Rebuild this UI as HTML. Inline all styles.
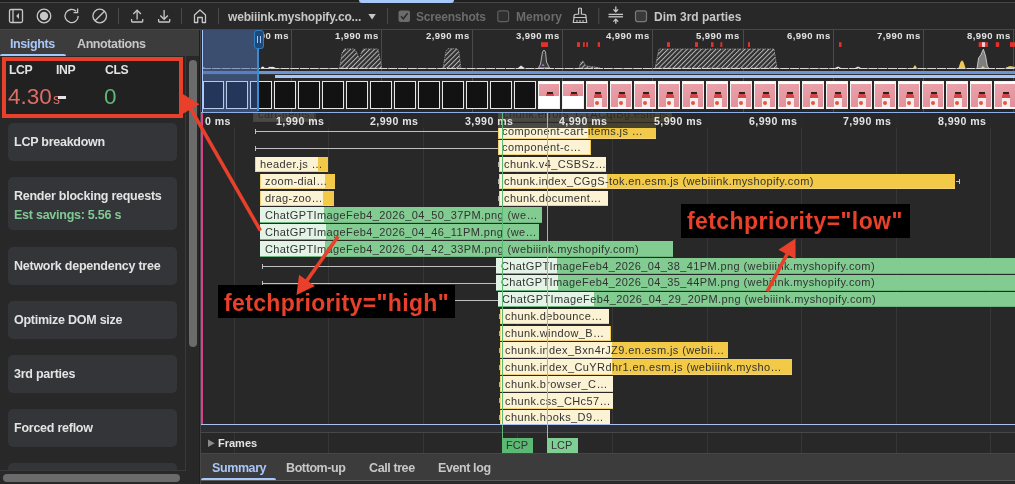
<!DOCTYPE html><html><head><meta charset="utf-8"><style>
*{margin:0;padding:0;box-sizing:border-box}
html,body{width:1015px;height:484px;overflow:hidden;background:#282828;font-family:"Liberation Sans", sans-serif;}
.a{position:absolute}
.t{position:absolute;white-space:nowrap;line-height:1;will-change:transform}
.card{position:absolute;left:8px;width:169px;background:#333538;border-radius:5px}
.ct{will-change:transform;position:absolute;left:6px;font-size:12.5px;font-weight:bold;letter-spacing:-0.25px;color:#e3e3e3;white-space:nowrap;line-height:1}
.bar{position:absolute;height:15.8px;overflow:hidden;white-space:nowrap}
.bt{will-change:transform;position:absolute;left:4.5px;top:2.5px;font-size:11px;letter-spacing:0.39px;color:#333;line-height:1;white-space:nowrap}
</style></head><body>
<div class="a" style="left:0;top:0;width:1015px;height:2px;background:#1f1f1f"></div><div class="a" style="left:0;top:2px;width:1015px;height:1px;background:#474747"></div><div class="a" style="left:358.8px;top:0;width:95.3px;height:2.8px;background:#a8c7fa;border-radius:0 0 3px 3px"></div><div class="a" style="left:0;top:3px;width:1015px;height:26px;background:#282828"></div><div class="a" style="left:0;top:29px;width:1015px;height:1px;background:#474747"></div><svg class="a" style="left:0;top:0" width="1015" height="30"><rect x="9.5" y="9.5" width="13" height="13" rx="1.5" fill="none" stroke="#c7c7c7" stroke-width="1.3"/><line x1="13" y1="9.5" x2="13" y2="22.5" stroke="#c7c7c7" stroke-width="1.3"/><path d="M19 13 L16.2 16 L19 19 Z" fill="#c7c7c7"/><circle cx="44" cy="16" r="6.8" fill="none" stroke="#c7c7c7" stroke-width="1.3"/><circle cx="44" cy="16" r="4.2" fill="#c7c7c7"/><path d="M78.2 16 A6.6 6.6 0 1 1 76.2 11.3" fill="none" stroke="#c7c7c7" stroke-width="1.3"/><path d="M77.6 8.6 L77.6 12.6 L73.6 12.6" fill="none" stroke="#c7c7c7" stroke-width="1.3"/><circle cx="99.7" cy="16" r="6.8" fill="none" stroke="#c7c7c7" stroke-width="1.3"/><line x1="95" y1="20.8" x2="104.5" y2="11.2" stroke="#c7c7c7" stroke-width="1.3"/><line x1="118.5" y1="8" x2="118.5" y2="24" stroke="#4a4a4a" stroke-width="1"/><line x1="181.5" y1="8" x2="181.5" y2="24" stroke="#4a4a4a" stroke-width="1"/><line x1="218.5" y1="8" x2="218.5" y2="24" stroke="#4a4a4a" stroke-width="1"/><line x1="387.5" y1="8" x2="387.5" y2="24" stroke="#4a4a4a" stroke-width="1"/><line x1="598.8" y1="8" x2="598.8" y2="24" stroke="#4a4a4a" stroke-width="1"/><path d="M131.6 19 L131.6 21.3 Q131.6 22 132.3 22 L142 22 Q142.7 22 142.7 21.3 L142.7 19" fill="none" stroke="#c7c7c7" stroke-width="1.3"/><line x1="137.1" y1="10.5" x2="137.1" y2="19.5" stroke="#c7c7c7" stroke-width="1.3"/><path d="M133.3 14 L137.1 10.2 L140.9 14" fill="none" stroke="#c7c7c7" stroke-width="1.3"/><path d="M158.6 19 L158.6 21.3 Q158.6 22 159.3 22 L169 22 Q169.7 22 169.7 21.3 L169.7 19" fill="none" stroke="#c7c7c7" stroke-width="1.3"/><line x1="164.1" y1="10" x2="164.1" y2="19" stroke="#c7c7c7" stroke-width="1.3"/><path d="M160.3 15.5 L164.1 19.3 L167.9 15.5" fill="none" stroke="#c7c7c7" stroke-width="1.3"/><path d="M194.5 22.5 L194.5 15 L200 10 L205.5 15 L205.5 22.5 L202.3 22.5 L202.3 17.5 L197.7 17.5 L197.7 22.5 Z" fill="none" stroke="#c7c7c7" stroke-width="1.3" stroke-linejoin="round"/><path d="M368.4 14 L375.8 14 L372.1 19.5 Z" fill="#c7c7c7"/><rect x="398.5" y="10.5" width="11.5" height="11.5" rx="2" fill="#6b6b6b"/><path d="M401 16.3 L403.3 18.8 L407.6 13.3" fill="none" stroke="#282828" stroke-width="1.4"/><rect x="497.8" y="10.8" width="10.8" height="10.8" rx="2" fill="#2f2f2f" stroke="#5f5f5f" stroke-width="1.2"/><path d="M578.6 8.5 Q580 7.5 581.4 8.5 L581.4 14 L585 14.5 Q586 15 586 16 L586 17.5 L574 17.5 L574 16 Q574 15 575 14.5 L578.6 14 Z" fill="none" stroke="#c7c7c7" stroke-width="1.2"/><path d="M574 17.5 L573.3 22.5 L586.7 22.5 L586 17.5" fill="none" stroke="#c7c7c7" stroke-width="1.2"/><path d="M577 20 L577 22.5 M580 20 L580 22.5 M583 20 L583 22.5" stroke="#c7c7c7" stroke-width="1"/><line x1="608.5" y1="14.4" x2="623" y2="14.4" stroke="#c7c7c7" stroke-width="1.3"/><line x1="608.5" y1="16.8" x2="623" y2="16.8" stroke="#c7c7c7" stroke-width="1.3"/><path d="M615.8 6.5 L615.8 11.5 M613.4 9.4 L615.8 11.8 L618.2 9.4" fill="none" stroke="#c7c7c7" stroke-width="1.3"/><path d="M615.8 23.8 L615.8 19.5 M613.4 21.6 L615.8 19.2 L618.2 21.6" fill="none" stroke="#c7c7c7" stroke-width="1.3"/><rect x="635.5" y="10.8" width="11" height="10.8" rx="2" fill="#3a3a3a" stroke="#7a7a7a" stroke-width="1.2"/></svg><div class="t" style="left:228.4px;top:10.8px;font-size:12px;font-weight:bold;letter-spacing:-0.17px;color:#c7c7c7">webiiink.myshopify.co...</div><div class="t" style="left:416.4px;top:10.8px;font-size:12px;font-weight:bold;letter-spacing:-0.2px;color:#6b6b6b">Screenshots</div><div class="t" style="left:515.7px;top:10.8px;font-size:12px;font-weight:bold;color:#6b6b6b">Memory</div><div class="t" style="left:653.5px;top:10.8px;font-size:12px;font-weight:bold;color:#c7c7c7">Dim 3rd parties</div><div class="a" style="left:0;top:30px;width:200px;height:26px;background:#3c3c3c"></div><div class="t" style="left:10.2px;top:37.5px;font-size:12.5px;font-weight:bold;letter-spacing:-0.4px;color:#a8c7fa">Insights</div><div class="t" style="left:76.5px;top:37.5px;font-size:12.5px;font-weight:bold;letter-spacing:-0.4px;color:#c7c7c7">Annotations</div><div class="a" style="left:0;top:54px;width:66px;height:2.6px;background:#a8c7fa;border-radius:2px 2px 0 0"></div><div class="a" style="left:0;top:56px;width:200px;height:428px;background:#282828"></div><div class="a" style="left:185px;top:56px;width:1px;height:414px;background:#3a3a3a"></div><div class="a" style="left:0;top:469.5px;width:185.5px;height:1px;background:#3a3a3a"></div><div class="a" style="left:189px;top:60px;width:8px;height:287px;background:#6b6b6b;border-radius:4px"></div><div class="a" style="left:3px;top:473.6px;width:176.5px;height:8px;background:#6b6b6b;border-radius:4px"></div><div class="a" style="left:199px;top:30px;width:1px;height:454px;background:#1e1e1e"></div><div class="a" style="left:200px;top:30px;width:1px;height:454px;background:#474747"></div><div class="card" style="top:123px;height:38px"><div class="ct" style="top:12.6px">LCP breakdown</div></div><div class="card" style="top:177px;height:53px"><div class="ct" style="top:12.8px">Render blocking requests</div><div class="ct" style="top:31.6px;color:#81c995">Est savings: 5.56 s</div></div><div class="card" style="top:247px;height:38px"><div class="ct" style="top:12.6px">Network dependency tree</div></div><div class="card" style="top:301px;height:38px"><div class="ct" style="top:12.6px">Optimize DOM size</div></div><div class="card" style="top:355px;height:38px"><div class="ct" style="top:12.6px">3rd parties</div></div><div class="card" style="top:409px;height:38px"><div class="ct" style="top:12.6px">Forced reflow</div></div><div class="card" style="top:463px;height:7px;border-radius:5px 5px 0 0"></div><div class="a" style="left:2px;top:57px;width:181px;height:60.5px;border:4.3px solid #e8402a;background:#212121"></div><div class="t" style="left:8.6px;top:64.3px;font-size:12.2px;font-weight:bold;letter-spacing:-0.35px;color:#e3e3e3">LCP</div><div class="t" style="left:56px;top:64.3px;font-size:12.2px;font-weight:bold;letter-spacing:-0.35px;color:#e3e3e3">INP</div><div class="t" style="left:104.5px;top:64.3px;font-size:12.2px;font-weight:bold;letter-spacing:-0.35px;color:#e3e3e3">CLS</div><div class="t" style="left:8px;top:86px;font-size:22.5px;color:#dd6d65">4.30<span style="font-size:14px;margin-left:1.2px">s</span></div><div class="a" style="left:57.5px;top:96px;width:8px;height:2.5px;background:#e3e3e3"></div><div class="t" style="left:104px;top:86px;font-size:22.5px;color:#5bb974">0</div><div class="a" style="left:201px;top:30px;width:814px;height:454px;background:#282828"></div><div class="a" style="left:291.00px;top:30px;width:1px;height:82px;background:#4a4a4a"></div><div class="a" style="left:381.30px;top:30px;width:1px;height:82px;background:#4a4a4a"></div><div class="a" style="left:471.60px;top:30px;width:1px;height:82px;background:#4a4a4a"></div><div class="a" style="left:561.90px;top:30px;width:1px;height:82px;background:#4a4a4a"></div><div class="a" style="left:652.20px;top:30px;width:1px;height:82px;background:#4a4a4a"></div><div class="a" style="left:742.50px;top:30px;width:1px;height:82px;background:#4a4a4a"></div><div class="a" style="left:832.80px;top:30px;width:1px;height:82px;background:#4a4a4a"></div><div class="a" style="left:923.10px;top:30px;width:1px;height:82px;background:#4a4a4a"></div><div class="a" style="left:1013.40px;top:30px;width:1px;height:82px;background:#4a4a4a"></div><div class="t" style="right:726.30px;top:31.4px;font-size:9.5px;font-weight:bold;letter-spacing:0.45px;color:#e3e3e3">990 ms</div><div class="t" style="right:636.00px;top:31.4px;font-size:9.5px;font-weight:bold;letter-spacing:0.45px;color:#e3e3e3">1,990 ms</div><div class="t" style="right:545.70px;top:31.4px;font-size:9.5px;font-weight:bold;letter-spacing:0.45px;color:#e3e3e3">2,990 ms</div><div class="t" style="right:455.40px;top:31.4px;font-size:9.5px;font-weight:bold;letter-spacing:0.45px;color:#e3e3e3">3,990 ms</div><div class="t" style="right:365.10px;top:31.4px;font-size:9.5px;font-weight:bold;letter-spacing:0.45px;color:#e3e3e3">4,990 ms</div><div class="t" style="right:274.80px;top:31.4px;font-size:9.5px;font-weight:bold;letter-spacing:0.45px;color:#e3e3e3">5,990 ms</div><div class="t" style="right:184.50px;top:31.4px;font-size:9.5px;font-weight:bold;letter-spacing:0.45px;color:#e3e3e3">6,990 ms</div><div class="t" style="right:94.20px;top:31.4px;font-size:9.5px;font-weight:bold;letter-spacing:0.45px;color:#e3e3e3">7,990 ms</div><div class="t" style="right:3.90px;top:31.4px;font-size:9.5px;font-weight:bold;letter-spacing:0.45px;color:#e3e3e3">8,990 ms</div><svg class="a" style="left:0;top:0" width="1015" height="112"><defs><pattern id="h" width="3.4" height="3.4" patternUnits="userSpaceOnUse" patternTransform="rotate(45)"><rect width="3.4" height="3.4" fill="#303030"/><rect width="1" height="3.4" fill="#b8b8b8"/></pattern></defs><path d="M339.6,68 L342,53 L344.5,48.9 L354.5,48.9 L357,53 L359.5,59.5 L361.5,52 L363.5,48.9 L378,48.9 L381.7,68 Z" fill="url(#h)" stroke="#bdbdbd" stroke-width="0.6" stroke-dasharray="1.5 1"/><path d="M443,68 L446,51 L448,48.7 L457,48.7 L459,52 L460.8,68 Z" fill="url(#h)" stroke="#bdbdbd" stroke-width="0.6" stroke-dasharray="1.5 1"/><path d="M655,68 L659,49 L774,49 L777,68 Z" fill="url(#h)" stroke="#bdbdbd" stroke-width="0.6" stroke-dasharray="1.5 1"/><path d="M579,68 L581,62 L583,61 L586,66 L595,67 L600,68 Z" fill="url(#h)" stroke="#bdbdbd" stroke-width="0.6" stroke-dasharray="1.5 1"/><path d="M538.5 68 L540.5 64 L542.5 52 L544 50 L545.5 52 L546.5 62 L549.5 68 Z" fill="#3a3a3a" stroke="#d0d0d0" stroke-width="0.8"/><path d="M541.5 66 L543 63.5 L544.5 66 Z" fill="#b06cd8"/><path d="M518 68 L521 65.5 L524.5 68 Z" fill="#e3e3e3"/><path d="M977 68.5 L978.6 58 L980.8 55 L983.4 49.2 L985.6 56 L987.3 66 L989 68.5 Z" fill="#7e7e7e" stroke="#e0e0e0" stroke-width="0.8"/><path d="M958.5 68 L960.5 62 L962 60.3 L963.5 62 L965.5 68 Z" fill="#f2c94c"/><path d="M913 68 L915 65 L917 68 Z" fill="#f2c94c"/><path d="M981 68 L983 66 L985 68 Z" fill="#f2c94c"/><path d="M1005 68 L1010 66 L1015 67 L1015 68 Z" fill="#f2c94c"/><path d="M835 68 L838 66.5 L841 68 Z" fill="#e3e3e3"/><path d="M855 68 L858 66.5 L861 68 Z" fill="#e3e3e3"/><path d="M260.5 68.5 Q262.7 64.5 265 68.5 Z M267.5 68.5 Q269 66 271 67 Q273 65.8 276.6 68.5 Z M202 68.5 Q203.5 65.5 205.5 68.5 Z" fill="#e8e8e8"/><line x1="202" y1="68.5" x2="1015" y2="68.5" stroke="#d8d8d8" stroke-width="1" stroke-dasharray="9 0.8"/><rect x="541" y="42.2" width="7.0" height="4.7" fill="#e8302a"/><rect x="577" y="42.2" width="3.0" height="4.7" fill="#e8302a"/><rect x="583" y="42.2" width="1.8" height="4.7" fill="#e8302a"/><rect x="586.2" y="42.2" width="1.8" height="4.7" fill="#e8302a"/><rect x="597.7" y="42.2" width="2.3" height="4.7" fill="#e8302a"/><rect x="667" y="42.2" width="3.0" height="4.7" fill="#e8302a"/><rect x="695" y="42.2" width="3.0" height="4.7" fill="#e8302a"/><rect x="711" y="42.2" width="2.5" height="4.7" fill="#e8302a"/><rect x="720.4" y="42.2" width="1.9" height="4.7" fill="#e8302a"/><rect x="748" y="42.2" width="2.0" height="4.7" fill="#e8302a"/><rect x="839" y="42.2" width="2.5" height="4.7" fill="#e8302a"/><rect x="978.7" y="42.2" width="9.2" height="4.7" fill="#e8302a"/><rect x="995.8" y="42.2" width="3.4" height="4.7" fill="#e8302a"/><rect x="1010" y="42.2" width="5.0" height="4.7" fill="#e8302a"/><rect x="982" y="42.2" width="3" height="4.7" fill="#f0d0d0"/></svg><div class="a" style="left:202px;top:71px;width:813px;height:3.1px;background:#6a96d8"></div><div class="a" style="left:202px;top:74.1px;width:813px;height:1px;background:#333"></div><div class="a" style="left:275px;top:75.1px;width:740px;height:3px;background:#a8c7fa"></div><div class="a" style="left:202.50px;top:80.8px;width:21.8px;height:28.1px;border:1.2px solid #e6e6e6;background:#121212"></div><div class="a" style="left:226.49px;top:80.8px;width:21.8px;height:28.1px;border:1.2px solid #e6e6e6;background:#121212"></div><div class="a" style="left:250.48px;top:80.8px;width:21.8px;height:28.1px;border:1.2px solid #e6e6e6;background:#121212"></div><div class="a" style="left:274.47px;top:80.8px;width:21.8px;height:28.1px;border:1.2px solid #e6e6e6;background:#121212"></div><div class="a" style="left:298.46px;top:80.8px;width:21.8px;height:28.1px;border:1.2px solid #e6e6e6;background:#121212"></div><div class="a" style="left:322.45px;top:80.8px;width:21.8px;height:28.1px;border:1.2px solid #e6e6e6;background:#121212"></div><div class="a" style="left:346.44px;top:80.8px;width:21.8px;height:28.1px;border:1.2px solid #e6e6e6;background:#121212"></div><div class="a" style="left:370.43px;top:80.8px;width:21.8px;height:28.1px;border:1.2px solid #e6e6e6;background:#121212"></div><div class="a" style="left:394.42px;top:80.8px;width:21.8px;height:28.1px;border:1.2px solid #e6e6e6;background:#121212"></div><div class="a" style="left:418.41px;top:80.8px;width:21.8px;height:28.1px;border:1.2px solid #e6e6e6;background:#121212"></div><div class="a" style="left:442.40px;top:80.8px;width:21.8px;height:28.1px;border:1.2px solid #e6e6e6;background:#121212"></div><div class="a" style="left:466.39px;top:80.8px;width:21.8px;height:28.1px;border:1.2px solid #e6e6e6;background:#121212"></div><div class="a" style="left:490.38px;top:80.8px;width:21.8px;height:28.1px;border:1.2px solid #e6e6e6;background:#121212"></div><div class="a" style="left:514.37px;top:80.8px;width:21.8px;height:28.1px;border:1.2px solid #e6e6e6;background:#121212"></div><div class="a" style="left:538.36px;top:80.8px;width:21.8px;height:28.1px;border:1px solid #f2f2f2;background:#fff;overflow:hidden"><div class="a" style="left:0;top:0;width:100%;height:3.2px;background:#fff"></div><div class="a" style="left:0;top:2.4px;width:100%;height:11.7px;background:linear-gradient(160deg,#eba2aa,#e08f99)"></div><div class="a" style="left:7.5px;top:10.3px;width:6.4px;height:2px;background:#2a2222"></div><div class="a" style="left:7px;top:12.3px;width:7.5px;height:1.6px;background:#d84a4a"></div></div><div class="a" style="left:562.35px;top:80.8px;width:21.8px;height:28.1px;border:1px solid #f2f2f2;background:#fff;overflow:hidden"><div class="a" style="left:0;top:0;width:100%;height:3.2px;background:#fff"></div><div class="a" style="left:0;top:2.4px;width:100%;height:11.7px;background:linear-gradient(160deg,#eba2aa,#e08f99)"></div><div class="a" style="left:7.5px;top:10.3px;width:6.4px;height:2px;background:#2a2222"></div><div class="a" style="left:7px;top:12.3px;width:7.5px;height:1.6px;background:#d84a4a"></div></div><div class="a" style="left:586.34px;top:80.8px;width:21.8px;height:28.1px;border:1px solid #f2f2f2;background:#fff;overflow:hidden"><div class="a" style="left:0;top:0;width:100%;height:3.2px;background:#fff"></div><div class="a" style="left:0;top:2.4px;width:100%;height:23px;background:linear-gradient(160deg,#eba2aa,#e08f99)"></div><div class="a" style="left:7.5px;top:10.3px;width:6.4px;height:2px;background:#2a2222"></div><div class="a" style="left:7px;top:12.2px;width:7.8px;height:3.8px;background:#d64545;border-radius:2px 2px 0 0"></div><div class="a" style="left:7px;top:16px;width:7.8px;height:9px;background:#f4ecec"></div><div class="a" style="left:8px;top:19.5px;width:4px;height:4px;background:#e05a40;border-radius:50%"></div></div><div class="a" style="left:610.33px;top:80.8px;width:21.8px;height:28.1px;border:1px solid #f2f2f2;background:#fff;overflow:hidden"><div class="a" style="left:0;top:0;width:100%;height:3.2px;background:#fff"></div><div class="a" style="left:0;top:2.4px;width:100%;height:23px;background:linear-gradient(160deg,#eba2aa,#e08f99)"></div><div class="a" style="left:7.5px;top:10.3px;width:6.4px;height:2px;background:#2a2222"></div><div class="a" style="left:7px;top:12.2px;width:7.8px;height:3.8px;background:#d64545;border-radius:2px 2px 0 0"></div><div class="a" style="left:7px;top:16px;width:7.8px;height:9px;background:#f4ecec"></div><div class="a" style="left:8px;top:19.5px;width:4px;height:4px;background:#e05a40;border-radius:50%"></div></div><div class="a" style="left:634.32px;top:80.8px;width:21.8px;height:28.1px;border:1px solid #f2f2f2;background:#fff;overflow:hidden"><div class="a" style="left:0;top:0;width:100%;height:3.2px;background:#fff"></div><div class="a" style="left:0;top:2.4px;width:100%;height:23px;background:linear-gradient(160deg,#eba2aa,#e08f99)"></div><div class="a" style="left:7.5px;top:10.3px;width:6.4px;height:2px;background:#2a2222"></div><div class="a" style="left:7px;top:12.2px;width:7.8px;height:3.8px;background:#d64545;border-radius:2px 2px 0 0"></div><div class="a" style="left:7px;top:16px;width:7.8px;height:9px;background:#f4ecec"></div><div class="a" style="left:8px;top:19.5px;width:4px;height:4px;background:#e05a40;border-radius:50%"></div></div><div class="a" style="left:658.31px;top:80.8px;width:21.8px;height:28.1px;border:1px solid #f2f2f2;background:#fff;overflow:hidden"><div class="a" style="left:0;top:0;width:100%;height:3.2px;background:#fff"></div><div class="a" style="left:0;top:2.4px;width:100%;height:23px;background:linear-gradient(160deg,#eba2aa,#e08f99)"></div><div class="a" style="left:7.5px;top:10.3px;width:6.4px;height:2px;background:#2a2222"></div><div class="a" style="left:7px;top:12.2px;width:7.8px;height:3.8px;background:#d64545;border-radius:2px 2px 0 0"></div><div class="a" style="left:7px;top:16px;width:7.8px;height:9px;background:#f4ecec"></div><div class="a" style="left:8px;top:19.5px;width:4px;height:4px;background:#e05a40;border-radius:50%"></div></div><div class="a" style="left:682.30px;top:80.8px;width:21.8px;height:28.1px;border:1px solid #f2f2f2;background:#fff;overflow:hidden"><div class="a" style="left:0;top:0;width:100%;height:3.2px;background:#fff"></div><div class="a" style="left:0;top:2.4px;width:100%;height:23px;background:linear-gradient(160deg,#eba2aa,#e08f99)"></div><div class="a" style="left:7.5px;top:10.3px;width:6.4px;height:2px;background:#2a2222"></div><div class="a" style="left:7px;top:12.2px;width:7.8px;height:3.8px;background:#d64545;border-radius:2px 2px 0 0"></div><div class="a" style="left:7px;top:16px;width:7.8px;height:9px;background:#f4ecec"></div><div class="a" style="left:8px;top:19.5px;width:4px;height:4px;background:#e05a40;border-radius:50%"></div></div><div class="a" style="left:706.29px;top:80.8px;width:21.8px;height:28.1px;border:1px solid #f2f2f2;background:#fff;overflow:hidden"><div class="a" style="left:0;top:0;width:100%;height:3.2px;background:#fff"></div><div class="a" style="left:0;top:2.4px;width:100%;height:23px;background:linear-gradient(160deg,#eba2aa,#e08f99)"></div><div class="a" style="left:7.5px;top:10.3px;width:6.4px;height:2px;background:#2a2222"></div><div class="a" style="left:7px;top:12.2px;width:7.8px;height:3.8px;background:#d64545;border-radius:2px 2px 0 0"></div><div class="a" style="left:7px;top:16px;width:7.8px;height:9px;background:#f4ecec"></div><div class="a" style="left:8px;top:19.5px;width:4px;height:4px;background:#e05a40;border-radius:50%"></div></div><div class="a" style="left:730.28px;top:80.8px;width:21.8px;height:28.1px;border:1px solid #f2f2f2;background:#fff;overflow:hidden"><div class="a" style="left:0;top:0;width:100%;height:3.2px;background:#fff"></div><div class="a" style="left:0;top:2.4px;width:100%;height:23px;background:linear-gradient(160deg,#eba2aa,#e08f99)"></div><div class="a" style="left:7.5px;top:10.3px;width:6.4px;height:2px;background:#2a2222"></div><div class="a" style="left:7px;top:12.2px;width:7.8px;height:3.8px;background:#d64545;border-radius:2px 2px 0 0"></div><div class="a" style="left:7px;top:16px;width:7.8px;height:9px;background:#f4ecec"></div><div class="a" style="left:8px;top:19.5px;width:4px;height:4px;background:#e05a40;border-radius:50%"></div></div><div class="a" style="left:754.27px;top:80.8px;width:21.8px;height:28.1px;border:1px solid #f2f2f2;background:#fff;overflow:hidden"><div class="a" style="left:0;top:0;width:100%;height:3.2px;background:#fff"></div><div class="a" style="left:0;top:2.4px;width:100%;height:23px;background:linear-gradient(160deg,#eba2aa,#e08f99)"></div><div class="a" style="left:7.5px;top:10.3px;width:6.4px;height:2px;background:#2a2222"></div><div class="a" style="left:7px;top:12.2px;width:7.8px;height:3.8px;background:#d64545;border-radius:2px 2px 0 0"></div><div class="a" style="left:7px;top:16px;width:7.8px;height:9px;background:#f4ecec"></div><div class="a" style="left:8px;top:19.5px;width:4px;height:4px;background:#e05a40;border-radius:50%"></div></div><div class="a" style="left:778.26px;top:80.8px;width:21.8px;height:28.1px;border:1px solid #f2f2f2;background:#fff;overflow:hidden"><div class="a" style="left:0;top:0;width:100%;height:3.2px;background:#fff"></div><div class="a" style="left:0;top:2.4px;width:100%;height:23px;background:linear-gradient(160deg,#eba2aa,#e08f99)"></div><div class="a" style="left:7.5px;top:10.3px;width:6.4px;height:2px;background:#2a2222"></div><div class="a" style="left:7px;top:12.2px;width:7.8px;height:3.8px;background:#d64545;border-radius:2px 2px 0 0"></div><div class="a" style="left:7px;top:16px;width:7.8px;height:9px;background:#f4ecec"></div><div class="a" style="left:8px;top:19.5px;width:4px;height:4px;background:#e05a40;border-radius:50%"></div></div><div class="a" style="left:802.25px;top:80.8px;width:21.8px;height:28.1px;border:1px solid #f2f2f2;background:#fff;overflow:hidden"><div class="a" style="left:0;top:0;width:100%;height:3.2px;background:#fff"></div><div class="a" style="left:0;top:2.4px;width:100%;height:23px;background:linear-gradient(160deg,#eba2aa,#e08f99)"></div><div class="a" style="left:7.5px;top:10.3px;width:6.4px;height:2px;background:#2a2222"></div><div class="a" style="left:7px;top:12.2px;width:7.8px;height:3.8px;background:#d64545;border-radius:2px 2px 0 0"></div><div class="a" style="left:7px;top:16px;width:7.8px;height:9px;background:#f4ecec"></div><div class="a" style="left:8px;top:19.5px;width:4px;height:4px;background:#e05a40;border-radius:50%"></div></div><div class="a" style="left:826.24px;top:80.8px;width:21.8px;height:28.1px;border:1px solid #f2f2f2;background:#fff;overflow:hidden"><div class="a" style="left:0;top:0;width:100%;height:3.2px;background:#fff"></div><div class="a" style="left:0;top:2.4px;width:100%;height:23px;background:linear-gradient(160deg,#eba2aa,#e08f99)"></div><div class="a" style="left:7.5px;top:10.3px;width:6.4px;height:2px;background:#2a2222"></div><div class="a" style="left:7px;top:12.2px;width:7.8px;height:3.8px;background:#d64545;border-radius:2px 2px 0 0"></div><div class="a" style="left:7px;top:16px;width:7.8px;height:9px;background:#f4ecec"></div><div class="a" style="left:8px;top:19.5px;width:4px;height:4px;background:#e05a40;border-radius:50%"></div></div><div class="a" style="left:850.23px;top:80.8px;width:21.8px;height:28.1px;border:1px solid #f2f2f2;background:#fff;overflow:hidden"><div class="a" style="left:0;top:0;width:100%;height:3.2px;background:#fff"></div><div class="a" style="left:0;top:2.4px;width:100%;height:23px;background:linear-gradient(160deg,#eba2aa,#e08f99)"></div><div class="a" style="left:7.5px;top:10.3px;width:6.4px;height:2px;background:#2a2222"></div><div class="a" style="left:7px;top:12.2px;width:7.8px;height:3.8px;background:#d64545;border-radius:2px 2px 0 0"></div><div class="a" style="left:7px;top:16px;width:7.8px;height:9px;background:#f4ecec"></div><div class="a" style="left:8px;top:19.5px;width:4px;height:4px;background:#e05a40;border-radius:50%"></div></div><div class="a" style="left:874.22px;top:80.8px;width:21.8px;height:28.1px;border:1px solid #f2f2f2;background:#fff;overflow:hidden"><div class="a" style="left:0;top:0;width:100%;height:3.2px;background:#fff"></div><div class="a" style="left:0;top:2.4px;width:100%;height:23px;background:linear-gradient(160deg,#eba2aa,#e08f99)"></div><div class="a" style="left:7.5px;top:10.3px;width:6.4px;height:2px;background:#2a2222"></div><div class="a" style="left:7px;top:12.2px;width:7.8px;height:3.8px;background:#d64545;border-radius:2px 2px 0 0"></div><div class="a" style="left:7px;top:16px;width:7.8px;height:9px;background:#f4ecec"></div><div class="a" style="left:8px;top:19.5px;width:4px;height:4px;background:#e05a40;border-radius:50%"></div></div><div class="a" style="left:898.21px;top:80.8px;width:21.8px;height:28.1px;border:1px solid #f2f2f2;background:#fff;overflow:hidden"><div class="a" style="left:0;top:0;width:100%;height:3.2px;background:#fff"></div><div class="a" style="left:0;top:2.4px;width:100%;height:23px;background:linear-gradient(160deg,#eba2aa,#e08f99)"></div><div class="a" style="left:7.5px;top:10.3px;width:6.4px;height:2px;background:#2a2222"></div><div class="a" style="left:7px;top:12.2px;width:7.8px;height:3.8px;background:#d64545;border-radius:2px 2px 0 0"></div><div class="a" style="left:7px;top:16px;width:7.8px;height:9px;background:#f4ecec"></div><div class="a" style="left:8px;top:19.5px;width:4px;height:4px;background:#e05a40;border-radius:50%"></div></div><div class="a" style="left:922.20px;top:80.8px;width:21.8px;height:28.1px;border:1px solid #f2f2f2;background:#fff;overflow:hidden"><div class="a" style="left:0;top:0;width:100%;height:3.2px;background:#fff"></div><div class="a" style="left:0;top:2.4px;width:100%;height:23px;background:linear-gradient(160deg,#eba2aa,#e08f99)"></div><div class="a" style="left:7.5px;top:10.3px;width:6.4px;height:2px;background:#2a2222"></div><div class="a" style="left:7px;top:12.2px;width:7.8px;height:3.8px;background:#d64545;border-radius:2px 2px 0 0"></div><div class="a" style="left:7px;top:16px;width:7.8px;height:9px;background:#f4ecec"></div><div class="a" style="left:8px;top:19.5px;width:4px;height:4px;background:#e05a40;border-radius:50%"></div></div><div class="a" style="left:946.19px;top:80.8px;width:21.8px;height:28.1px;border:1px solid #f2f2f2;background:#fff;overflow:hidden"><div class="a" style="left:0;top:0;width:100%;height:3.2px;background:#fff"></div><div class="a" style="left:0;top:2.4px;width:100%;height:23px;background:linear-gradient(160deg,#eba2aa,#e08f99)"></div><div class="a" style="left:7.5px;top:10.3px;width:6.4px;height:2px;background:#2a2222"></div><div class="a" style="left:7px;top:12.2px;width:7.8px;height:3.8px;background:#d64545;border-radius:2px 2px 0 0"></div><div class="a" style="left:7px;top:16px;width:7.8px;height:9px;background:#f4ecec"></div><div class="a" style="left:8px;top:19.5px;width:4px;height:4px;background:#e05a40;border-radius:50%"></div></div><div class="a" style="left:970.18px;top:80.8px;width:21.8px;height:28.1px;border:1px solid #f2f2f2;background:#fff;overflow:hidden"><div class="a" style="left:0;top:0;width:100%;height:3.2px;background:#fff"></div><div class="a" style="left:0;top:2.4px;width:100%;height:23px;background:linear-gradient(160deg,#eba2aa,#e08f99)"></div><div class="a" style="left:7.5px;top:10.3px;width:6.4px;height:2px;background:#2a2222"></div><div class="a" style="left:7px;top:12.2px;width:7.8px;height:3.8px;background:#d64545;border-radius:2px 2px 0 0"></div><div class="a" style="left:7px;top:16px;width:7.8px;height:9px;background:#f4ecec"></div><div class="a" style="left:8px;top:19.5px;width:4px;height:4px;background:#e05a40;border-radius:50%"></div></div><div class="a" style="left:994.17px;top:80.8px;width:21.8px;height:28.1px;border:1px solid #f2f2f2;background:#fff;overflow:hidden"><div class="a" style="left:0;top:0;width:100%;height:3.2px;background:#fff"></div><div class="a" style="left:0;top:2.4px;width:100%;height:23px;background:linear-gradient(160deg,#eba2aa,#e08f99)"></div><div class="a" style="left:7.5px;top:10.3px;width:6.4px;height:2px;background:#2a2222"></div><div class="a" style="left:7px;top:12.2px;width:7.8px;height:3.8px;background:#d64545;border-radius:2px 2px 0 0"></div><div class="a" style="left:7px;top:16px;width:7.8px;height:9px;background:#f4ecec"></div><div class="a" style="left:8px;top:19.5px;width:4px;height:4px;background:#e05a40;border-radius:50%"></div></div><div class="a" style="left:202px;top:30px;width:55.6px;height:81.5px;background:rgba(75,110,170,0.55)"></div><div class="a" style="left:202px;top:30px;width:1.2px;height:81.5px;background:#a8c7fa"></div><div class="a" style="left:202.50px;top:80.8px;width:21.80px;height:28.1px;border:1.2px solid #b9c9ea;background:#24365a"></div><div class="a" style="left:226.49px;top:80.8px;width:21.80px;height:28.1px;border:1.2px solid #b9c9ea;background:#24365a"></div><div class="a" style="left:250.48px;top:80.8px;width:6.62px;height:28.1px;border:1.2px solid #b9c9ea;border-right:none;background:#24365a"></div><div class="a" style="left:257.1px;top:46px;width:2.1px;height:65px;background:#3a8bd0"></div><div class="a" style="left:254px;top:30.3px;width:10px;height:18.4px;background:#1d4a7c;border:1.3px solid #2f7fc1;border-radius:3px"></div><div class="a" style="left:257.2px;top:35.9px;width:1px;height:7px;background:#a8c7fa"></div><div class="a" style="left:260.1px;top:35.9px;width:1px;height:7px;background:#a8c7fa"></div><div class="a" style="left:201px;top:111.9px;width:814px;height:1px;background:#8fb0e6"></div><div class="a" style="left:201px;top:113px;width:814px;height:311.3px;overflow:hidden"><div class="a" style="left:32.50px;top:0;width:1px;height:320px;background:#363636"></div><div class="a" style="left:127.10px;top:0;width:1px;height:320px;background:#363636"></div><div class="a" style="left:221.70px;top:0;width:1px;height:320px;background:#363636"></div><div class="a" style="left:316.30px;top:0;width:1px;height:320px;background:#363636"></div><div class="a" style="left:410.90px;top:0;width:1px;height:320px;background:#363636"></div><div class="a" style="left:505.50px;top:0;width:1px;height:320px;background:#363636"></div><div class="a" style="left:600.10px;top:0;width:1px;height:320px;background:#363636"></div><div class="a" style="left:694.70px;top:0;width:1px;height:320px;background:#363636"></div><div class="a" style="left:789.30px;top:0;width:1px;height:320px;background:#363636"></div><div class="bar" style="left:52.00px;top:-6.88px;width:62.60px;height:15.6px;background:linear-gradient(90deg,#fcf3d5 62.6px,#f2ca48 62.6px);box-shadow:inset 1px -1px 0 #f0d27a"><div class="bt">cart-items.js …</div></div><div class="bar" style="left:297.00px;top:-6.88px;width:173.70px;height:15.6px;background:linear-gradient(90deg,#fcf3d5 107.6px,#f2ca48 107.6px);box-shadow:inset 1px -1px 0 #f0d27a"><div class="bt">chunk.errors_C1ACqIBg.esm.js …</div></div><div class="a" style="left:54.30px;top:18.00px;width:242.50px;height:1px;background:#c0c0c0"></div><div class="a" style="left:54.00px;top:16.00px;width:1px;height:5px;background:#c0c0c0"></div><div class="bar" style="left:296.80px;top:10.00px;width:157.80px;height:15.6px;background:linear-gradient(90deg,#fcf3d5 90.2px,#f2ca48 90.2px);box-shadow:inset 1px -1px 0 #f0d27a"><div class="bt">component-cart-items.js …</div></div><div class="a" style="left:54.30px;top:35.00px;width:242.50px;height:1px;background:#c0c0c0"></div><div class="a" style="left:54.00px;top:33.00px;width:1px;height:5px;background:#c0c0c0"></div><div class="bar" style="left:296.80px;top:26.88px;width:93.40px;height:15.6px;background:linear-gradient(90deg,#fcf3d5 91.7px,#f2ca48 91.7px);box-shadow:inset 1px -1px 0 #f0d27a"><div class="bt">component-c…</div></div><div class="bar" style="left:54.00px;top:43.76px;width:73.30px;height:15.6px;background:linear-gradient(90deg,#fcf3d5 62.6px,#f2ca48 62.6px);box-shadow:inset 1px -1px 0 #f0d27a"><div class="bt">header.js …</div></div><div class="a" style="left:297.10px;top:49.06px;width:1px;height:5px;background:#aaa"></div><div class="bar" style="left:298.30px;top:43.76px;width:106.70px;height:15.6px;background:linear-gradient(90deg,#fcf3d5 106.7px,#f2ca48 106.7px);box-shadow:inset 1px -1px 0 #f0d27a"><div class="bt">chunk.v4_CSBSz…</div></div><div class="bar" style="left:59.20px;top:60.64px;width:75.10px;height:15.6px;background:linear-gradient(90deg,#fcf3d5 64.8px,#f2ca48 64.8px);box-shadow:inset 1px -1px 0 #f0d27a"><div class="bt">zoom-dial…</div></div><div class="a" style="left:297.10px;top:65.94px;width:1px;height:5px;background:#aaa"></div><div class="bar" style="left:298.30px;top:60.64px;width:456.20px;height:15.6px;background:linear-gradient(90deg,#fcf3d5 108.0px,#f2ca48 108.0px);box-shadow:inset 1px -1px 0 #f0d27a"><div class="bt">chunk.index_CGgS-tok.en.esm.js (webiiink.myshopify.com)</div></div><div class="bar" style="left:59.20px;top:77.52px;width:73.50px;height:15.6px;background:linear-gradient(90deg,#fcf3d5 62.8px,#f2ca48 62.8px);box-shadow:inset 1px -1px 0 #f0d27a"><div class="bt">drag-zoo…</div></div><div class="a" style="left:297.10px;top:82.82px;width:1px;height:5px;background:#aaa"></div><div class="bar" style="left:298.30px;top:77.52px;width:108.80px;height:15.6px;background:linear-gradient(90deg,#fcf3d5 108.8px,#f2ca48 108.8px);box-shadow:inset 1px -1px 0 #f0d27a"><div class="bt">chunk.document…</div></div><div class="bar" style="left:59.20px;top:94.40px;width:282.30px;height:15.6px;background:linear-gradient(90deg,#e3f3e6 63.7px,#82cc92 63.7px);box-shadow:inset 0 -1px 0 #6fb37f"><div class="bt">ChatGPTImageFeb4_2026_04_50_37PM.png (we…</div></div><div class="bar" style="left:59.20px;top:111.28px;width:279.20px;height:15.6px;background:linear-gradient(90deg,#e3f3e6 65.8px,#82cc92 65.8px);box-shadow:inset 0 -1px 0 #6fb37f"><div class="bt">ChatGPTImageFeb4_2026_04_46_11PM.png (we…</div></div><div class="bar" style="left:59.20px;top:128.16px;width:412.40px;height:15.6px;background:linear-gradient(90deg,#e3f3e6 64.8px,#82cc92 64.8px);box-shadow:inset 0 -1px 0 #6fb37f"><div class="bt">ChatGPTImageFeb4_2026_04_42_33PM.png (webiiink.myshopify.com)</div></div><div class="a" style="left:61.50px;top:153.00px;width:233.90px;height:1px;background:#c0c0c0"></div><div class="a" style="left:61.00px;top:151.00px;width:1px;height:5px;background:#c0c0c0"></div><div class="bar" style="left:295.40px;top:145.04px;width:519.60px;height:15.6px;background:linear-gradient(90deg,#e3f3e6 60.9px,#82cc92 60.9px);box-shadow:inset 0 -1px 0 #6fb37f"><div class="bt">ChatGPTImageFeb4_2026_04_38_41PM.png (webiiink.myshopify.com)</div></div><div class="a" style="left:61.50px;top:170.00px;width:233.90px;height:1px;background:#c0c0c0"></div><div class="a" style="left:61.00px;top:168.00px;width:1px;height:5px;background:#c0c0c0"></div><div class="bar" style="left:295.40px;top:161.92px;width:519.60px;height:15.6px;background:linear-gradient(90deg,#e3f3e6 61.9px,#82cc92 61.9px);box-shadow:inset 0 -1px 0 #6fb37f"><div class="bt">ChatGPTImageFeb4_2026_04_35_44PM.png (webiiink.myshopify.com)</div></div><div class="a" style="left:61.50px;top:187.00px;width:235.10px;height:1px;background:#c0c0c0"></div><div class="a" style="left:61.00px;top:185.00px;width:1px;height:5px;background:#c0c0c0"></div><div class="bar" style="left:296.60px;top:178.80px;width:518.40px;height:15.6px;background:linear-gradient(90deg,#e3f3e6 95.6px,#82cc92 95.6px);box-shadow:inset 0 -1px 0 #6fb37f"><div class="bt">ChatGPTImageFeb4_2026_04_29_20PM.png (webiiink.myshopify.com)</div></div><div class="a" style="left:298.10px;top:200.98px;width:1px;height:5px;background:#aaa"></div><div class="bar" style="left:299.30px;top:195.68px;width:109.20px;height:15.6px;background:linear-gradient(90deg,#fcf3d5 109.2px,#f2ca48 109.2px);box-shadow:inset 1px -1px 0 #f0d27a"><div class="bt">chunk.debounce…</div></div><div class="a" style="left:298.10px;top:217.86px;width:1px;height:5px;background:#aaa"></div><div class="bar" style="left:299.30px;top:212.56px;width:110.50px;height:15.6px;background:linear-gradient(90deg,#fcf3d5 110.5px,#f2ca48 110.5px);box-shadow:inset 1px -1px 0 #f0d27a"><div class="bt">chunk.window_B…</div></div><div class="a" style="left:298.10px;top:234.74px;width:1px;height:5px;background:#aaa"></div><div class="bar" style="left:299.30px;top:229.44px;width:228.10px;height:15.6px;background:linear-gradient(90deg,#fcf3d5 111.8px,#f2ca48 111.8px);box-shadow:inset 1px -1px 0 #f0d27a"><div class="bt">chunk.index_Bxn4rJZ9.en.esm.js (webii…</div></div><div class="a" style="left:298.10px;top:251.62px;width:1px;height:5px;background:#aaa"></div><div class="bar" style="left:299.30px;top:246.32px;width:292.20px;height:15.6px;background:linear-gradient(90deg,#fcf3d5 111.8px,#f2ca48 111.8px);box-shadow:inset 1px -1px 0 #f0d27a"><div class="bt">chunk.index_CuYRdhr1.en.esm.js (webiiink.mysho…</div></div><div class="a" style="left:298.10px;top:268.50px;width:1px;height:5px;background:#aaa"></div><div class="bar" style="left:299.30px;top:263.20px;width:113.10px;height:15.6px;background:linear-gradient(90deg,#fcf3d5 113.1px,#f2ca48 113.1px);box-shadow:inset 1px -1px 0 #f0d27a"><div class="bt">chunk.browser_C…</div></div><div class="a" style="left:298.10px;top:285.38px;width:1px;height:5px;background:#aaa"></div><div class="bar" style="left:299.30px;top:280.08px;width:113.10px;height:15.6px;background:linear-gradient(90deg,#fcf3d5 113.1px,#f2ca48 113.1px);box-shadow:inset 1px -1px 0 #f0d27a"><div class="bt">chunk.css_CHc57…</div></div><div class="a" style="left:298.10px;top:302.26px;width:1px;height:5px;background:#aaa"></div><div class="bar" style="left:299.30px;top:296.96px;width:109.70px;height:15.6px;background:linear-gradient(90deg,#fcf3d5 109.7px,#f2ca48 109.7px);box-shadow:inset 1px -1px 0 #f0d27a"><div class="bt">chunk.hooks_D9…</div></div><div class="a" style="left:754.50px;top:67.94px;width:3px;height:1px;background:#c4c4c4"></div><div class="a" style="left:757.50px;top:65.94px;width:1px;height:5px;background:#c4c4c4"></div><div class="a" style="left:0;top:0;width:814px;height:14.70px;background:rgba(40,40,40,0.84)"></div><div class="t" style="left:3.50px;top:3.00px;font-size:10.6px;font-weight:bold;letter-spacing:0.45px;color:#e3e3e3">0 ms</div><div class="t" style="right:691.10px;top:3.00px;font-size:10.6px;font-weight:bold;letter-spacing:0.45px;color:#e3e3e3">1,990 ms</div><div class="t" style="right:596.50px;top:3.00px;font-size:10.6px;font-weight:bold;letter-spacing:0.45px;color:#e3e3e3">2,990 ms</div><div class="t" style="right:501.90px;top:3.00px;font-size:10.6px;font-weight:bold;letter-spacing:0.45px;color:#e3e3e3">3,990 ms</div><div class="t" style="right:407.30px;top:3.00px;font-size:10.6px;font-weight:bold;letter-spacing:0.45px;color:#e3e3e3">4,990 ms</div><div class="t" style="right:312.70px;top:3.00px;font-size:10.6px;font-weight:bold;letter-spacing:0.45px;color:#e3e3e3">5,990 ms</div><div class="t" style="right:218.10px;top:3.00px;font-size:10.6px;font-weight:bold;letter-spacing:0.45px;color:#e3e3e3">6,990 ms</div><div class="t" style="right:123.50px;top:3.00px;font-size:10.6px;font-weight:bold;letter-spacing:0.45px;color:#e3e3e3">7,990 ms</div><div class="t" style="right:28.90px;top:3.00px;font-size:10.6px;font-weight:bold;letter-spacing:0.45px;color:#e3e3e3">8,990 ms</div><div class="a" style="left:0.30px;top:0;width:2px;height:320px;background:#d9428c"></div><div class="a" style="left:301.20px;top:0;width:1.1px;height:320px;background:#5bb974"></div><div class="a" style="left:346.20px;top:0;width:1.1px;height:320px;background:#7fcf95"></div></div><div class="a" style="left:201px;top:424px;width:814px;height:1.3px;background:#a9c2f0"></div><div class="a" style="left:201px;top:425.3px;width:814px;height:6.7px;background:#2c2e33"></div><div class="a" style="left:201px;top:432px;width:814px;height:1px;background:#474747"></div><div class="a" style="left:233.50px;top:433px;width:1px;height:20px;background:#363636"></div><div class="a" style="left:328.10px;top:433px;width:1px;height:20px;background:#363636"></div><div class="a" style="left:422.70px;top:433px;width:1px;height:20px;background:#363636"></div><div class="a" style="left:517.30px;top:433px;width:1px;height:20px;background:#363636"></div><div class="a" style="left:611.90px;top:433px;width:1px;height:20px;background:#363636"></div><div class="a" style="left:706.50px;top:433px;width:1px;height:20px;background:#363636"></div><div class="a" style="left:801.10px;top:433px;width:1px;height:20px;background:#363636"></div><div class="a" style="left:895.70px;top:433px;width:1px;height:20px;background:#363636"></div><div class="a" style="left:990.30px;top:433px;width:1px;height:20px;background:#363636"></div><div class="a" style="left:201px;top:453px;width:814px;height:1px;background:#474747"></div><svg class="a" style="left:0;top:430px" width="230" height="24"><path d="M208 9.4 L214.7 13.2 L208 17 Z" fill="#8a8a8a"/></svg><div class="t" style="left:218.3px;top:438px;font-size:11px;font-weight:bold;color:#e3e3e3">Frames</div><div class="a" style="left:502.2px;top:425px;width:1.1px;height:13px;background:#5bb974"></div><div class="a" style="left:547.2px;top:425px;width:1.1px;height:13px;background:#7fcf95"></div><div class="a" style="left:502.1px;top:437.8px;width:30.9px;height:15px;background:#5bb974"></div><div class="a" style="left:547px;top:437.8px;width:30.9px;height:15px;background:#7fcf95"></div><div class="t" style="left:506.4px;top:440px;font-size:11px;color:#333">FCP</div><div class="t" style="left:551.3px;top:440px;font-size:11px;color:#333">LCP</div><div class="a" style="left:201px;top:454px;width:814px;height:30px;background:#3c3c3c"></div><div class="t" style="left:211.5px;top:461.5px;font-size:12.5px;font-weight:bold;letter-spacing:-0.4px;color:#a8c7fa">Summary</div><div class="t" style="left:286.4px;top:461.5px;font-size:12.5px;font-weight:bold;letter-spacing:-0.4px;color:#c7c7c7">Bottom-up</div><div class="t" style="left:369px;top:461.5px;font-size:12.5px;font-weight:bold;letter-spacing:-0.4px;color:#c7c7c7">Call tree</div><div class="t" style="left:438px;top:461.5px;font-size:12.5px;font-weight:bold;letter-spacing:-0.4px;color:#c7c7c7">Event log</div><div class="a" style="left:201px;top:478px;width:75.2px;height:3px;background:#a8c7fa;border-radius:2px 2px 0 0"></div><div class="a" style="left:201px;top:480px;width:814px;height:1px;background:#5a5a5a"></div><div class="a" style="left:201px;top:481px;width:814px;height:3px;background:#2a2a2a"></div><div class="a" style="left:218.2px;top:285.2px;width:237.2px;height:33.3px;background:#000"></div><div class="t" style="left:224px;top:291.6px;font-size:23px;font-weight:bold;letter-spacing:0.35px;color:#e8402a">fetchpriority="high"</div><div class="a" style="left:681px;top:204.4px;width:229.1px;height:33.7px;background:#000"></div><div class="t" style="left:687.2px;top:209.6px;font-size:23px;font-weight:bold;letter-spacing:0.42px;color:#e8402a">fetchpriority="low"</div><svg class="a" style="left:0;top:0" width="1015" height="484"><line x1="260.4" y1="230.7" x2="189.9" y2="107.4" stroke="#e8402a" stroke-width="3.6"/><path d="M182.0 93.5 L199.4 104.3 L182.5 114.0 Z" fill="#e8402a"/><line x1="338.1" y1="236.5" x2="305.8" y2="282.1" stroke="#e8402a" stroke-width="3.6"/><path d="M296.5 295.1 L299.0 274.8 L314.9 286.1 Z" fill="#e8402a"/><line x1="767.2" y1="291.4" x2="788.0" y2="252.5" stroke="#e8402a" stroke-width="3.6"/><path d="M795.5 238.4 L795.6 258.9 L778.4 249.7 Z" fill="#e8402a"/></svg></body></html>
